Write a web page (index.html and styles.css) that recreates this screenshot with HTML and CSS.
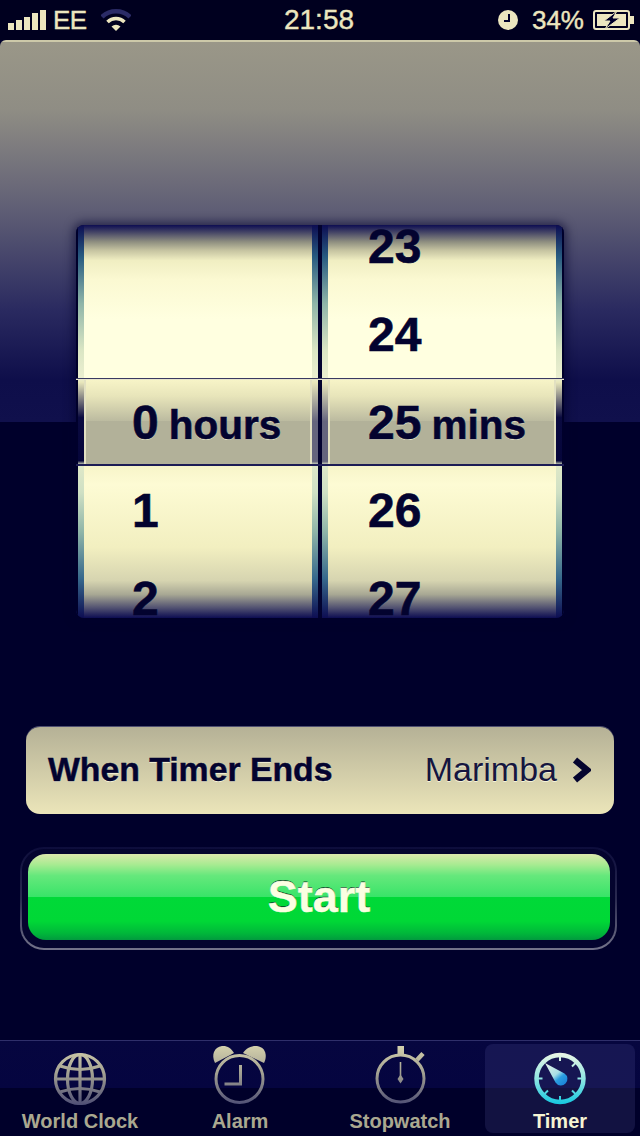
FILE: index.html
```html
<!DOCTYPE html>
<html lang="en">
<head>
<meta charset="utf-8">
<title>Timer</title>
<link rel="stylesheet" href="styles.css">
</head>
<body>
<div class="screen">
  <header class="status">
    <div class="status-left">
      <div class="signal"><i class="b1"></i><i class="b2"></i><i class="b3"></i><i class="b4"></i><i class="b5"></i></div>
      <span class="carrier">EE</span>
      <svg class="wifi" width="30" height="22" viewBox="0 0 30 22">
        <path d="M1 8 A20 20 0 0 1 29 8" fill="none" stroke="#2b2b66" stroke-width="4.5"/>
        <path d="M6.5 13 A12 12 0 0 1 23.5 13" fill="none" stroke="#ece6bf" stroke-width="3.5"/>
        <path d="M15 22 L10.5 17.5 A7 7 0 0 1 19.5 17.5 Z" fill="#ece6bf"/>
      </svg>
    </div>
    <div class="clock">21:58</div>
    <div class="status-right">
      <svg class="alarm-dot" width="20" height="20" viewBox="0 0 20 20">
        <circle cx="10" cy="10" r="10" fill="#ece6bf"/>
        <path d="M11 4 V11 H6" fill="none" stroke="#00002b" stroke-width="2"/>
      </svg>
      <span class="percent">34%</span>
      <svg class="battery" width="41" height="20" viewBox="0 0 41 20">
        <rect x="1" y="1" width="35" height="18" rx="2" fill="none" stroke="#ece6bf" stroke-width="2"/>
        <rect x="4" y="4" width="29" height="12" fill="#ece6bf"/>
        <rect x="37" y="6" width="4" height="8" fill="#ece6bf"/>
        <path d="M24 1 L11 11 H17 L12 19 L27 8 H20 Z" fill="#00002b" stroke="#ece6bf" stroke-width="1"/>
      </svg>
    </div>
  </header>

  <main class="main">
    <section class="picker">
      <div class="strip strip-outer-l"></div>
      <div class="wheel wheel-hours">
        <div class="rows">
          <div class="row"></div>
          <div class="row"></div>
          <div class="row row-selected"><span class="num">0</span><span class="unit">hours</span></div>
          <div class="row"><span class="num">1</span></div>
          <div class="row"><span class="num">2</span></div>
        </div>
      </div>
      <div class="strip"></div>
      <div class="divider"></div>
      <div class="strip"></div>
      <div class="wheel wheel-mins">
        <div class="rows">
          <div class="row"><span class="num">23</span></div>
          <div class="row"><span class="num">24</span></div>
          <div class="row row-selected"><span class="num">25</span><span class="unit">mins</span></div>
          <div class="row"><span class="num">26</span></div>
          <div class="row"><span class="num">27</span></div>
        </div>
      </div>
      <div class="strip strip-outer-r"></div>
      <div class="selection"></div>
    </section>

    <div class="setting">
      <span class="setting-label">When Timer Ends</span>
      <span class="setting-value">Marimba</span>
      <svg class="chevron" width="19" height="26" viewBox="0 0 19 26">
        <path d="M3 3 L15 13 L3 23" fill="none" stroke="#05052f" stroke-width="6.5"/>
      </svg>
    </div>

    <div class="start-ring">
      <div class="start-well">
        <div class="start">Start</div>
      </div>
    </div>
  </main>

  <nav class="tabs">
    <div class="tab">
      <svg class="icon" width="60" height="60" viewBox="0 0 60 60">
        <defs>
          <linearGradient id="iconGrad" gradientUnits="userSpaceOnUse" x1="0" y1="0" x2="0" y2="60">
            <stop offset="0" stop-color="#d4d0ac"/>
            <stop offset="0.45" stop-color="#a3a192"/>
            <stop offset="1" stop-color="#4c4c74"/>
          </linearGradient>
          <linearGradient id="timerGrad" gradientUnits="userSpaceOnUse" x1="0" y1="8" x2="0" y2="58">
            <stop offset="0" stop-color="#e8f6e6"/>
            <stop offset="0.5" stop-color="#8fe6e2"/>
            <stop offset="1" stop-color="#16c8e0"/>
          </linearGradient>
          <linearGradient id="wedgeGrad" gradientUnits="userSpaceOnUse" x1="14" y1="16" x2="34" y2="40">
            <stop offset="0" stop-color="#eef6e8"/>
            <stop offset="0.55" stop-color="#a8dfe6"/>
            <stop offset="0.72" stop-color="#2a9ee0"/>
            <stop offset="1" stop-color="#1a80d8"/>
          </linearGradient>
        </defs>
        <g fill="none" stroke="url(#iconGrad)" stroke-width="3.2">
          <circle cx="30" cy="33" r="24.5"/>
          <ellipse cx="30" cy="33" rx="12.5" ry="24.5"/>
          <path d="M30 8.5 V57.5"/>
          <path d="M5.5 33 H54.5"/>
          <path d="M10 20 Q30 27 50 20"/>
          <path d="M10 46 Q30 39 50 46"/>
        </g>
      </svg>
      <span class="tab-label">World Clock</span>
    </div>
    <div class="tab">
      <svg class="icon" width="60" height="60" viewBox="0 0 60 60">
        <circle cx="29.5" cy="33" r="23.5" fill="none" stroke="url(#iconGrad)" stroke-width="3"/>
        <path d="M30.5 19 V38 H14.5" fill="none" stroke="url(#iconGrad)" stroke-width="3"/>
        <path d="M5 17 C1 9 4 1 12 0 C17 -0.5 21 2 24 7 Z" fill="url(#iconGrad)"/>
        <path d="M54 17 C58 9 55 1 47 0 C42 -0.5 36 2 33 7 Z" fill="url(#iconGrad)"/>
      </svg>
      <span class="tab-label">Alarm</span>
    </div>
    <div class="tab">
      <svg class="icon" width="60" height="60" viewBox="0 0 60 60">
        <circle cx="30.5" cy="32.5" r="23.5" fill="none" stroke="url(#iconGrad)" stroke-width="3"/>
        <rect x="27.5" y="0" width="6.5" height="9" fill="url(#iconGrad)"/>
        <path d="M47 14 L53 7.5" fill="none" stroke="url(#iconGrad)" stroke-width="4.5"/>
        <path d="M30.5 16 V36" fill="none" stroke="url(#iconGrad)" stroke-width="1.6"/>
        <path d="M30.5 28.5 L33.5 33 L30.5 37.5 L27.5 33 Z" fill="url(#iconGrad)"/>
      </svg>
      <span class="tab-label">Stopwatch</span>
    </div>
    <div class="tab tab-active">
      <svg class="icon" width="60" height="60" viewBox="0 0 60 60">
        <circle cx="30" cy="32.5" r="23.5" fill="none" stroke="url(#timerGrad)" stroke-width="4.5"/>
        <g stroke="url(#timerGrad)" stroke-width="2" fill="none">
          <path d="M30 9 V15"/>
          <path d="M30 50 V56"/>
          <path d="M6.5 32.5 H12.5"/>
          <path d="M47.5 32.5 H53.5"/>
          <path d="M46.5 16 L42 20.5"/>
          <path d="M13.5 49 L18 44.5"/>
          <path d="M46.5 49 L42 44.5"/>
        </g>
        <path d="M15 17 L34.5 27.5 A6.5 6.5 0 1 1 25.5 36.5 Z" fill="url(#wedgeGrad)"/>
      </svg>
      <span class="tab-label">Timer</span>
    </div>
  </nav>
</div>
</body>
</html>
```
FILE: styles.css
```css
* { box-sizing: border-box; }

html, body {
  margin: 0;
  padding: 0;
  background: #00002b;
}

.screen {
  width: 640px;
  height: 1136px;
  display: flex;
  flex-direction: column;
  overflow: hidden;
  font-family: "Liberation Sans", Arial, sans-serif;
  background: #00002b;
}

/* Status bar */
.status {
  height: 40px;
  flex: none;
  display: grid;
  grid-template-columns: 1fr auto 1fr;
  align-items: center;
  padding-right: 2px;
  color: #ece6bf;
  background: #00001f;
  -webkit-text-stroke: 0.4px #ece6bf;
}

.status-left {
  display: flex;
  align-items: center;
  padding-left: 8px;
}

.signal {
  display: flex;
  align-items: flex-end;
  gap: 2px;
  height: 20px;
  margin-right: 7px;
}

.signal i {
  display: block;
  width: 6px;
  background: #ece6bf;
}

.signal .b1 { height: 7px; }
.signal .b2 { height: 10px; }
.signal .b3 { height: 13px; }
.signal .b4 { height: 17px; }
.signal .b5 { height: 20px; }

.carrier {
  font-size: 26px;
  line-height: 40px;
  letter-spacing: -0.5px;
  margin-right: 14px;
}

.wifi { display: block; }

.clock {
  font-size: 28px;
  line-height: 40px;
}

.status-right {
  display: flex;
  align-items: center;
  justify-content: flex-end;
  padding-right: 4px;
}

.alarm-dot { display: block; margin-right: 14px; }

.percent {
  font-size: 26px;
  line-height: 40px;
  margin-right: 9px;
}

.battery { display: block; }

/* Main area */
.main {
  flex: 1;
  display: flex;
  flex-direction: column;
  padding-top: 185px;
  border-radius: 6px 6px 0 0;
  background-color: #00002b;
  background-image: linear-gradient(#cdc9a9 0, #cdc9a9 2px, #9a9788 2px, #8f8d84 70px, #5f5e75 170px, #2a2a60 270px, #0e0e4a 340px, #10104c 382px);
  background-size: 100% 382px;
  background-repeat: no-repeat;
}

/* Picker */
.picker {
  position: relative;
  width: 488px;
  height: 393px;
  margin-left: 76px;
  flex: none;
  display: flex;
  border-radius: 8px;
  overflow: hidden;
  background: #05053a;
  box-shadow: 0 0 10px 3px rgba(0, 0, 43, 0.55);
}

.strip {
  width: 6px;
  flex: none;
  background: linear-gradient(#0d0d52 0, #275a80 8%, #8fb5a8 20%, #dbe6c4 32%, #ebefd0 38.8%, #e9e7bc 40%, #65657e 50%, #65657e 60%, #6a6a80 60.2%, #dfe8c8 61%, #cfe0c4 68%, #8fb5a8 78%, #36688c 90%, #0d0d52 100%);
}

.strip-outer-l,
.strip-outer-r {
  width: 8px;
  background: linear-gradient(#0d0d52 0, #275a80 8%, #8fb5a8 20%, #dbe6c4 32%, #ebefd0 38.8%, #e9e7bc 40%, #0a0a40 49%, #05053a 60%, #dfe8c8 61%, #cfe0c4 68%, #8fb5a8 78%, #36688c 90%, #0d0d52 100%);
}

.strip-outer-l { box-shadow: inset 2px 0 0 #00002b; }
.strip-outer-r { box-shadow: inset -2px 0 0 #00002b; }

.divider {
  width: 4px;
  flex: none;
  background: #02022f;
}

.wheel {
  flex: 1;
  min-width: 0;
  overflow: hidden;
  background: linear-gradient(#0d0d52 0, #8f8f80 4.3%, #c4c2a0 6.4%, #f0eec2 9%, #fbf9d2 14%, #ffffe0 24%, #ffffe0 39%, #f6f3c6 60%, #fdfbd4 66%, #f2efc0 82%, #d6d4b0 90.5%, #a8a894 94%, #4f4f70 97.5%, #0d0d52 100%);
}

.rows { margin-top: -22px; }

.row {
  height: 88px;
  display: flex;
  align-items: baseline;
  color: #03032f;
  font-weight: 700;
  -webkit-text-stroke: 0.6px #03032f;
}

.wheel-hours .row { padding-left: 48px; }
.wheel-mins .row { padding-left: 40px; }

.row-selected {
  background-image:
    linear-gradient(90deg, #e2e0c2 0, #e2e0c2 2px, transparent 2px, transparent calc(100% - 2px), #e2e0c2 calc(100% - 2px)),
    linear-gradient(#f8f5c8 0, #e8e5ba 20%, #bcbba0 49%, #b2b199 49.5%, #b2b199 100%);
  background-size: 100% 85px;
  background-repeat: no-repeat;
  text-shadow: 0 1px 0 rgba(255, 255, 224, 0.7);
}

.num {
  font-size: 48px;
  line-height: 88px;
}

.unit {
  font-size: 40.5px;
  line-height: 88px;
  margin-left: 10px;
}

.selection {
  position: absolute;
  left: 0;
  right: 0;
  top: 153px;
  height: 88px;
  border-top: 1px solid #3a3a62;
  border-bottom: 2px solid #1c1c55;
  box-shadow: inset 0 1px 0 #e8e6cc;
  pointer-events: none;
}

/* When Timer Ends */
.setting {
  width: 588px;
  height: 87px;
  margin: 109px 0 0 26px;
  flex: none;
  display: flex;
  align-items: center;
  padding: 0 23px 2px 22px;
  border-radius: 14px;
  background: linear-gradient(#b5b196, #ebe5b9);
  box-shadow: 0 -1px 0 #4f4f70;
}

.setting-label {
  flex: 1;
  font-size: 33.75px;
  font-weight: 700;
  color: #03032f;
  -webkit-text-stroke: 0.5px #03032f;
  text-shadow: 0 1px 0 rgba(255, 255, 230, 0.8);
}

.setting-value {
  font-size: 34px;
  color: #16163f;
  text-shadow: 0 1px 0 rgba(255, 255, 230, 0.8);
  margin-right: 15px;
}

.chevron { display: block; }

/* Start */
.start-ring {
  width: 597px;
  height: 103px;
  margin: 33px 0 0 20px;
  flex: none;
  padding: 2px;
  border-radius: 24px;
  background: linear-gradient(#0d0d3c 0, #2a2a50 50%, #74748a 100%);
}

.start-well {
  height: 100%;
  padding: 5px 5px 7px 6px;
  border-radius: 22px;
  background: #04042e;
}

.start {
  height: 86px;
  display: flex;
  align-items: center;
  justify-content: center;
  border-radius: 18px;
  background: linear-gradient(#dbe7ac 0, #a9eb92 12%, #66e87c 25%, #38e468 50%, #00d938 50%, #00d836 78%, #00b83a 92%, #019a3e 100%);
  font-size: 45px;
  font-weight: 700;
  color: #fbffe2;
  -webkit-text-stroke: 0.5px #fbffe2;
  text-shadow: 0 -1px 0 #063d20;
}

/* Tab bar */
.tabs {
  height: 96px;
  flex: none;
  display: grid;
  grid-template-columns: repeat(4, 1fr);
  border-top: 1px solid #2f2f6a;
  background: linear-gradient(#06063f 0, #050540 49%, #00002a 49%, #00002a 100%);
}

.tab {
  margin: 3px 5px 4px;
  padding-top: 2px;
  display: flex;
  flex-direction: column;
  align-items: center;
  border-radius: 8px;
}

.icon { display: block; flex: none; overflow: visible; }

.tab-label {
  margin-top: 3px;
  font-size: 20px;
  line-height: 24px;
  font-weight: 700;
  color: #aaa890;
  white-space: nowrap;
}

.tab-active { background: rgba(90, 90, 160, 0.2); }

.tab-active .tab-label { color: #f6f4d4; }
```
